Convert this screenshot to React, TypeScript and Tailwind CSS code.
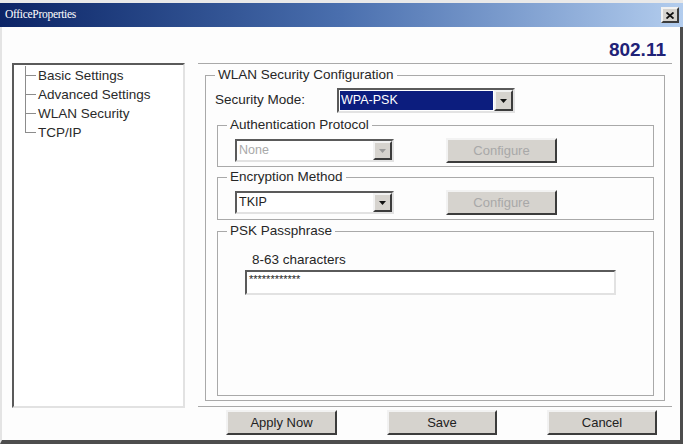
import React from 'react';

const sunken =
  'border-2 border-t-[#5a5a5a] border-l-[#5a5a5a] border-r-[#e2e2e2] border-b-[#e2e2e2]';
const raised =
  'border-2 border-t-[#f2f2f2] border-l-[#f2f2f2] border-r-[#3c3c3c] border-b-[#3c3c3c]';

const Arrow: React.FC<{ color: string }> = ({ color }) => (
  <svg width="7" height="4" viewBox="0 0 7 4">
    <polygon points="0,0 7,0 3.5,4" fill={color} />
  </svg>
);

interface ComboProps {
  value: string;
  width: string;
  height: string;
  selected?: boolean;
  disabled?: boolean;
}

const Combo: React.FC<ComboProps> = ({ value, width, height, selected, disabled }) => (
  <div className={`flex bg-white ${sunken} ${width} ${height}`}>
    <div className="flex-1 flex p-[1px]">
      <div
        className={`flex-1 flex items-center pl-[1px] text-[12.5px] ${
          selected ? 'bg-[#0c1d7e] text-white' : disabled ? 'text-[#a9a9a9]' : 'text-[#222]'
        }`}
      >
        {value}
      </div>
    </div>
    <div className={`w-[19px] flex items-center justify-center bg-[#d6d3ce] ${raised}`}>
      <Arrow color={disabled ? '#9a9a9a' : '#111'} />
    </div>
  </div>
);

const Button: React.FC<{ label: string; width: string; disabled?: boolean }> = ({
  label,
  width,
  disabled,
}) => (
  <div
    className={`h-[25px] ${width} flex items-center justify-center bg-[#d6d3ce] text-[13px] ${raised} ${
      disabled ? 'text-[#a8a8a8]' : 'text-[#222]'
    }`}
  >
    {label}
  </div>
);

const Group: React.FC<{ title: string; className?: string; children: React.ReactNode }> = ({
  title,
  className = '',
  children,
}) => (
  <fieldset className={`border border-[#a9a9a9] ${className}`}>
    <legend className="ml-[9px] px-[3px] text-[13.5px] leading-[16px] text-[#262626]">
      {title}
    </legend>
    {children}
  </fieldset>
);

const treeItems = ['Basic Settings', 'Advanced Settings', 'WLAN Security', 'TCP/IP'];

export default function App() {
  return (
    <div className="w-[683px] h-[444px] bg-[#e9e9e9] pt-[3px] overflow-hidden font-['Liberation_Sans',Arial,sans-serif]">
      <div className="h-[24px] flex items-center justify-between pl-[5px] pr-[4px] bg-gradient-to-r from-[#0c2466] via-[#4a6fae] to-[#b3cdee]">
        <span className="text-white text-[11.5px] font-['Liberation_Serif',serif] tracking-[-0.3px]">
          OfficeProperties
        </span>
        <div className={`w-[18px] h-[16px] flex items-center justify-center bg-[#d6d3ce] ${raised}`}>
          <svg width="8" height="7" viewBox="0 0 8 7">
            <path d="M0.5 0.5 L7.5 6.5 M7.5 0.5 L0.5 6.5" stroke="#111" strokeWidth="1.8" />
          </svg>
        </div>
      </div>

      <div className="h-[417px] bg-[#fdfdfd] border-l-2 border-l-[#e4e4e4] border-r-[3px] border-r-[#4d4d4d] border-b-4 border-b-[#4d4d4d] flex flex-col">
        <div className="h-[36px] flex justify-end pt-[12px] pr-[14px]">
          <span className="text-[19px] leading-[22px] font-bold text-[#1f2277]">802.11</span>
        </div>

        <div className="flex items-start">
          <div className={`ml-[10px] w-[173px] h-[345px] bg-white ${sunken} pt-[1px]`}>
            {treeItems.map((item, i) => (
              <div key={item} className="h-[19px] flex">
                <div className="ml-[11px] w-[11px] flex flex-col">
                  <div className="h-[9.5px] border-l border-b border-[#8c8c8c]" />
                  <div
                    className={`flex-1 ${i < treeItems.length - 1 ? 'border-l border-[#8c8c8c]' : ''}`}
                  />
                </div>
                <span className="ml-[2px] text-[13.5px] leading-[19px] text-[#2a2a2a]">{item}</span>
              </div>
            ))}
          </div>

          <div className="ml-[13px] w-[474px] flex flex-col">
            <div className="border-t border-b border-[#a9a9a9] pt-[3px] pb-[5px] px-[7px]">
              <Group title="WLAN Security Configuration" className="h-[334px]">
                <div className="mt-[5px] ml-[9px] flex items-center h-[25px]">
                  <span className="w-[122px] text-[13.5px] text-[#262626]">Security Mode:</span>
                  <Combo value="WPA-PSK" width="w-[178px]" height="h-[25px]" selected />
                </div>

                <div className="mx-[10px] ml-[11px]">
                  <Group title="Authentication Protocol" className="mt-[4px] pb-[3px]">
                    <div className="mt-[5px] ml-[17px] flex items-center h-[25px]">
                      <Combo value="None" width="w-[159px]" height="h-[23px]" disabled />
                      <div className="ml-[52px]">
                        <Button label="Configure" width="w-[111px]" disabled />
                      </div>
                    </div>
                  </Group>

                  <Group title="Encryption Method" className="mt-[2px] pb-[4px]">
                    <div className="mt-[5px] ml-[17px] flex items-center h-[25px]">
                      <Combo value="TKIP" width="w-[159px]" height="h-[23px]" />
                      <div className="ml-[52px]">
                        <Button label="Configure" width="w-[111px]" disabled />
                      </div>
                    </div>
                  </Group>

                  <Group title="PSK Passphrase" className="mt-[3px] h-[173px]">
                    <div className="mt-[13px] ml-[34px] text-[13.5px] leading-[16px] text-[#262626]">
                      8-63 characters
                    </div>
                    <div
                      className={`mt-[2px] ml-[27px] w-[371px] h-[25px] bg-white ${sunken} pl-[2px] text-[11px] leading-[14px] text-[#222]`}
                    >
                      ************
                    </div>
                  </Group>
                </div>
              </Group>
            </div>

            <div className="mt-[3px] pl-[28px] flex gap-[50px]">
              <Button label="Apply Now" width="w-[111px]" />
              <Button label="Save" width="w-[110px]" />
              <Button label="Cancel" width="w-[110px]" />
            </div>
          </div>
        </div>
      </div>
    </div>
  );
}
